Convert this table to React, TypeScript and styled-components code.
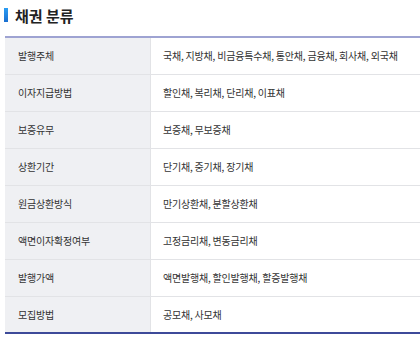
import React from "react";
import styled, { createGlobalStyle } from "styled-components";

const rows = [
  { head: "발행주체", body: "국채, 지방채, 비금융특수채, 통안채, 금융채, 회사채, 외국채" },
  { head: "이자지급방법", body: "할인채, 복리채, 단리채, 이표채" },
  { head: "보증유무", body: "보증채, 무보증채" },
  { head: "상환기간", body: "단기채, 중기채, 장기채" },
  { head: "원금상환방식", body: "만기상환채, 분할상환채" },
  { head: "액면이자확정여부", body: "고정금리채, 변동금리채" },
  { head: "발행가액", body: "액면발행채, 할인발행채, 할증발행채" },
  { head: "모집방법", body: "공모채, 사모채" },
];

const App = () => {
  return (
    <>
      <GlobalStyle />
      <Page>
        <Title>
          <TitleBar />
          채권 분류
        </Title>
        <Table>
          <tbody>
            {rows.map((row) => (
              <Row key={row.head}>
                <HeadCell>{row.head}</HeadCell>
                <BodyCell>{row.body}</BodyCell>
              </Row>
            ))}
          </tbody>
        </Table>
      </Page>
    </>
  );
};

const GlobalStyle = createGlobalStyle`
  body {
    margin: 0;
    background: #ffffff;
    font-family: "Noto Sans CJK KR", "Noto Sans", sans-serif;
    color: #333333;
  }
`;

const Page = styled.div`
  padding: 6px 0 0 5px;
`;

const Title = styled.h2`
  display: flex;
  align-items: center;
  gap: 7px;
  margin: 0 0 12px -1px;
  font-size: 15px;
  font-weight: bold;
  color: #222222;
  height: 18px;
`;

const TitleBar = styled.span`
  width: 4px;
  height: 14px;
  background: linear-gradient(#2a9df4, #1a6fd0);
`;

const Table = styled.table`
  width: 100%;
  border-collapse: collapse;
  border-top: 2px solid #9ea3d2;
  border-bottom: 2px solid #3d4a99;
  font-size: 10px;
  letter-spacing: -0.2px;
`;

const Row = styled.tr`
  height: 37px;
  & + & {
    border-top: 1px solid #e2e3e6;
  }
`;

const HeadCell = styled.th`
  width: 132px;
  padding: 0 0 0 13px;
  background: #eff0f3;
  border-right: 1px solid #e2e3e6;
  text-align: left;
  font-weight: normal;
  color: #333333;
`;

const BodyCell = styled.td`
  padding: 0 0 0 12px;
  color: #333333;
`;

export default App;
